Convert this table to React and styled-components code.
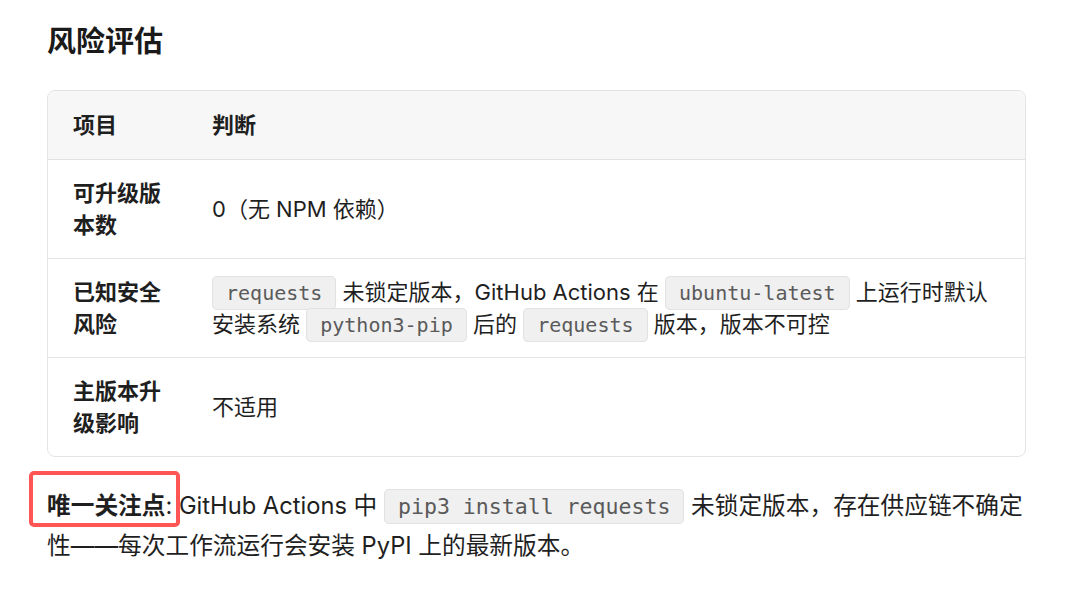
import styled, { createGlobalStyle } from "styled-components";

const GlobalStyle = createGlobalStyle`
  body {
    margin: 0;
    background: #ffffff;
    color: #1f1f1f;
    font-family: Inter, "Noto Sans CJK SC", sans-serif;
  }
`;

const rows = [
  { item: "可升级版本数", verdict: ["0（无 NPM 依赖）"] },
  {
    item: "已知安全风险",
    verdict: [
      { code: "requests" },
      " 未锁定版本，GitHub Actions 在 ",
      { code: "ubuntu-latest" },
      " 上运行时默认安装系统 ",
      { code: "python3-pip" },
      " 后的 ",
      { code: "requests" },
      " 版本，版本不可控",
    ],
  },
  { item: "主版本升级影响", verdict: ["不适用"] },
];

const App = () => {
  return (
    <>
      <GlobalStyle />
      <Page>
        <Heading>风险评估</Heading>
        <TableWrap>
          <Table>
            <thead>
              <tr>
                <Th $first>项目</Th>
                <Th>判断</Th>
              </tr>
            </thead>
            <tbody>
              {rows.map((row) => (
                <tr key={row.item}>
                  <Td $first>{row.item}</Td>
                  <Td>
                    {row.verdict.map((part, i) =>
                      typeof part === "string" ? (
                        part
                      ) : (
                        <Code key={i}>{part.code}</Code>
                      )
                    )}
                  </Td>
                </tr>
              ))}
            </tbody>
          </Table>
        </TableWrap>
        <Note>
          <Marked>唯一关注点</Marked>: GitHub Actions 中{" "}
          <Code>pip3 install requests</Code> 未锁定版本，存在供应链不确定性——每次工作流运行会安装 PyPI 上的最新版本。
        </Note>
      </Page>
    </>
  );
};

export default App;

const Page = styled.main`
  padding: 22px 54px 0 47px;
  width: 979px;
`;

const Heading = styled.h2`
  margin: 0;
  font-size: 29px;
  line-height: 40px;
  font-weight: 600;
  color: #1a1a1a;
`;

const TableWrap = styled.div`
  margin-top: 28px;
  border: 1px solid #e4e4e4;
  border-radius: 8px;
  overflow: hidden;
`;

const Table = styled.table`
  width: 100%;
  border-collapse: collapse;
  font-size: 22px;
  line-height: 32px;
`;

const Th = styled.th`
  text-align: left;
  font-weight: 600;
  background: #f7f7f7;
  padding: 18px ${({ $first }) => ($first ? "20px" : "26px")} 18px 25px;
  width: ${({ $first }) => ($first ? "94px" : "auto")};
  border-bottom: 1px solid #e2e2e2;
`;

const Td = styled.td`
  padding: 17px ${({ $first }) => ($first ? "20px" : "26px")} 17px 25px;
  font-weight: ${({ $first }) => ($first ? 600 : 400)};
  vertical-align: middle;
  border-bottom: 1px solid #e6e6e6;

  tr:last-child > & {
    border-bottom: none;
  }
`;

const Code = styled.code`
  font-family: "DejaVu Sans Mono", monospace;
  font-size: 0.91em;
  line-height: 1;
  color: #5a5a5a;
  background: #f0f0f0;
  border: 1px solid #e2e2e2;
  border-radius: 5px;
  padding: 4px 13px;
`;

const Note = styled.p`
  margin: 29px 0 0;
  font-size: 23.7px;
  line-height: 40px;
`;

const Marked = styled.strong`
  position: relative;
  font-weight: 700;

  &::after {
    content: "";
    position: absolute;
    left: -18px;
    right: -15px;
    top: -20px;
    bottom: -7px;
    border: 4px solid #ff5555;
    border-radius: 5px;
  }
`;
